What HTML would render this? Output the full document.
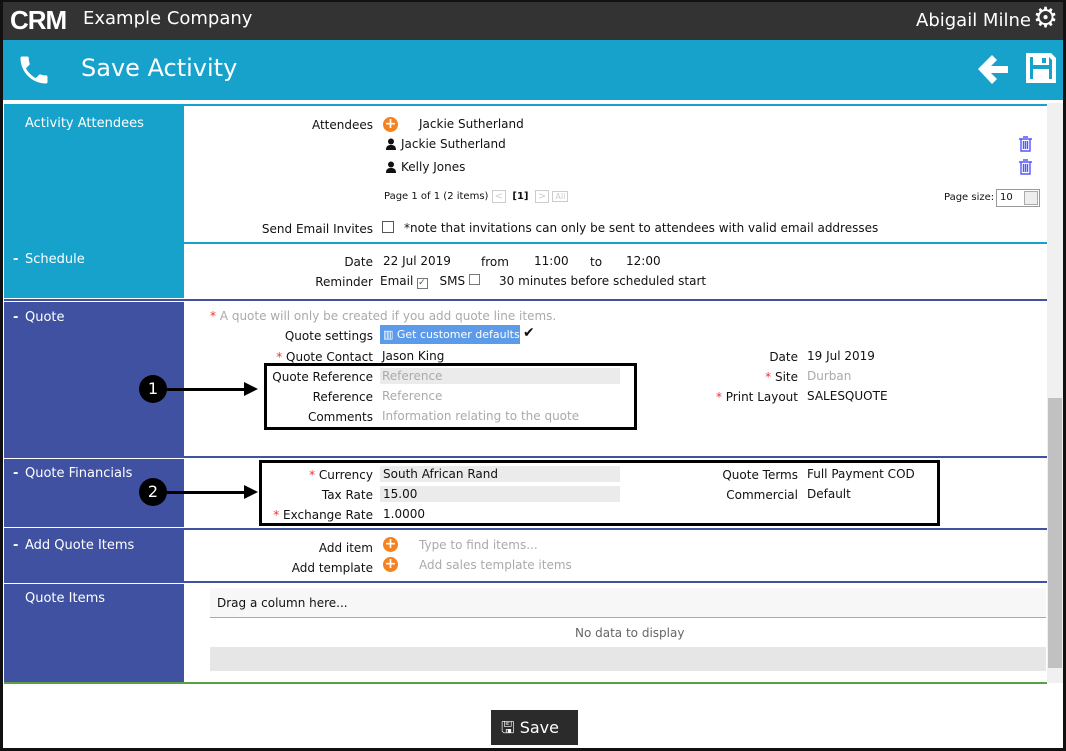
<!DOCTYPE html>
<html><head><meta charset="utf-8"><style>
*{margin:0;padding:0;box-sizing:border-box}
body{width:1066px;height:751px;position:relative;overflow:hidden;background:#fff;font-family:"DejaVu Sans","Liberation Sans",sans-serif;font-size:12px;color:#111}
.a{position:absolute;white-space:nowrap}
.r{text-align:right}
.g{color:#aaa}
.s{color:#e33}
.side{position:absolute;left:4px;width:180px;color:#fff;font-size:13px;padding:9px 0 0 21px}
.side b{font-weight:bold;position:absolute;left:9px}
.hl{position:absolute;left:4px;height:2px}
.fld{position:absolute;background:#ebebeb;height:16px}
.plus{position:absolute;width:15px;height:15px;border-radius:50%;background:#f58220;color:#fff;font-weight:bold;font-size:14px;line-height:15px;text-align:center}
.box{position:absolute;border:3px solid #000}
.num{position:absolute;width:28px;height:28px;border-radius:50%;background:#000;color:#fff;font-size:16px;text-align:center;line-height:28px}
.arr{position:absolute;height:3px;background:#000}
.arr:after{content:"";position:absolute;right:-4px;top:-6px;border-left:14px solid #000;border-top:7px solid transparent;border-bottom:7px solid transparent}
.p{position:absolute}
</style></head><body>
<div class="a" style="left:0;top:0;width:1066px;height:751px;border:3px solid #111;border-top:2px solid #111;z-index:10;pointer-events:none"></div>
<div class="a" style="left:0;top:0;width:1066px;height:40px;background:#333"></div>
<div class="a" style="left:10px;top:5px;color:#fff;font:bold 26px 'Liberation Sans',sans-serif;letter-spacing:-1px">CRM</div>
<div class="a" style="left:83px;top:8px;color:#fff;font-size:18px">Example Company</div>
<div class="a" style="left:916px;top:10px;color:#fff;font-size:18px">Abigail Milne</div>
<div class="a" style="left:1033px;top:1px;color:#fff;font-size:28px">⚙</div>
<div class="a" style="left:0;top:40px;width:1066px;height:60px;background:#17a2cb"></div>
<svg class="a" style="left:16px;top:52px" width="36" height="36" viewBox="0 0 24 24"><path fill="#fff" d="M6.6 10.8c1.4 2.8 3.8 5.1 6.6 6.6l2.2-2.2c.3-.3.7-.4 1-.2 1.1.4 2.3.6 3.6.6.6 0 1 .4 1 1V20c0 .6-.4 1-1 1C10.6 21 3 13.4 3 4c0-.6.4-1 1-1h3.5c.6 0 1 .4 1 1 0 1.3.2 2.5.6 3.6.1.3 0 .7-.2 1z"/></svg>
<div class="a" style="left:81px;top:54px;color:#fff;font-size:24px">Save Activity</div>
<svg class="a" style="left:976px;top:53px" width="34" height="32" viewBox="0 0 34 32"><path fill="#fff" d="M2 16L16 2l5 5-6 6h17v7H15l6 6-5 5z"/></svg>
<svg class="a" style="left:1024px;top:51px" width="34" height="34" viewBox="0 0 34 34"><path fill="#fff" d="M2 2h25l5 5v25H2zM6 6v22h22V9l-3-3v8H9V6zm12 1v5h4V7zM9 18h16v10H9z"/></svg>
<!-- sidebars -->
<div class="side" style="top:104px;height:138px;background:#17a2cb;padding-top:12px">Activity Attendees</div>
<div class="side" style="top:244px;height:54px;background:#17a2cb;padding-top:8px"><b>-</b>Schedule</div>
<div class="side" style="top:302px;height:154px;background:#3f51a0;padding-top:8px"><b>-</b>Quote</div>
<div class="side" style="top:459px;height:68px;background:#3f51a0;padding-top:7px"><b>-</b>Quote Financials</div>
<div class="side" style="top:530px;height:51px;background:#3f51a0;padding-top:8px"><b>-</b>Add Quote Items</div>
<div class="side" style="top:584px;height:99px;background:#3f51a0;padding-top:7px">Quote Items</div>
<div class="hl" style="top:104px;left:184px;width:863px;background:#17a2cb"></div>
<div class="hl" style="top:242px;width:1043px;background:#17a2cb"></div>
<div class="hl" style="top:299px;width:1043px;background:#3f51a0"></div>
<div class="hl" style="top:456px;width:1043px;background:#3f51a0"></div>
<div class="hl" style="top:528px;width:1043px;background:#3f51a0"></div>
<div class="hl" style="top:581px;width:1043px;background:#3f51a0"></div>
<div class="hl" style="top:682px;width:1043px;background:#5a9e46"></div>
<!-- scrollbar -->
<div class="a" style="left:1047px;top:103px;width:16px;height:580px;background:#f0f0f0"></div>
<div class="a" style="left:1048px;top:398px;width:14px;height:270px;background:#c1c1c1"></div>
<!-- attendees -->
<div class="a r" style="left:250px;width:123px;top:118px">Attendees</div>
<div class="plus" style="left:383px;top:117px">+</div>
<div class="a" style="left:419px;top:117px">Jackie Sutherland</div>
<svg class="p" style="left:385px;top:138px" width="12" height="12" viewBox="0 0 12 12"><circle cx="6" cy="3.5" r="3" fill="#111"/><path d="M1 12c0-4 2-5 5-5s5 1 5 5z" fill="#111"/></svg>
<div class="a" style="left:401px;top:137px">Jackie Sutherland</div>
<svg class="p" style="left:385px;top:161px" width="12" height="12" viewBox="0 0 12 12"><circle cx="6" cy="3.5" r="3" fill="#111"/><path d="M1 12c0-4 2-5 5-5s5 1 5 5z" fill="#111"/></svg>
<div class="a" style="left:401px;top:160px">Kelly Jones</div>
<div class="a" style="left:384px;top:191px;font-size:10px">Page 1 of 1 (2 items) <span style="border:1px solid #ccc;color:#ccc;padding:0 2px">&lt;</span> &nbsp;<b>[1]</b>&nbsp; <span style="border:1px solid #ccc;color:#ccc;padding:0 2px">&gt;</span> <span style="border:1px solid #ccc;color:#ccc;padding:0 2px;font-size:8px">All</span></div>
<svg class="p" style="left:1018px;top:136px" width="15" height="16" viewBox="0 0 15 16"><path d="M1 3h13M5 1h5M3 3v12h9V3M5.5 5v8M7.5 5v8M9.5 5v8" stroke="#55f" stroke-width="1.4" fill="none"/></svg>
<svg class="p" style="left:1018px;top:159px" width="15" height="16" viewBox="0 0 15 16"><path d="M1 3h13M5 1h5M3 3v12h9V3M5.5 5v8M7.5 5v8M9.5 5v8" stroke="#55f" stroke-width="1.4" fill="none"/></svg>
<div class="a" style="left:944px;top:192px;font-size:10px">Page size:</div>
<div class="a" style="left:996px;top:189px;width:44px;height:18px;border:1px solid #999;font-size:10px;padding:2px 3px">10<span style="position:absolute;right:1px;top:1px;width:14px;height:14px;border:1px solid #aaa;background:#eee"></span></div>
<div class="a r" style="left:200px;width:173px;top:222px">Send Email Invites</div>
<div class="a" style="left:382px;top:221px;width:12px;height:12px;border:1px solid #555"></div>
<div class="a" style="left:404px;top:221px">*note that invitations can only be sent to attendees with valid email addresses</div>
<!-- schedule -->
<div class="a r" style="left:250px;width:123px;top:255px">Date</div>
<div class="a" style="left:383px;top:254px">22 Jul 2019</div>
<div class="a" style="left:481px;top:255px">from</div>
<div class="a" style="left:534px;top:254px">11:00</div>
<div class="a" style="left:590px;top:255px">to</div>
<div class="a" style="left:626px;top:254px">12:00</div>
<div class="a r" style="left:250px;width:123px;top:275px">Reminder</div>
<div class="a" style="left:380px;top:274px">Email <span style="display:inline-block;width:11px;height:11px;border:1px solid #777;font-size:9px;line-height:9px;color:#555">✓</span> &nbsp; SMS <span style="display:inline-block;width:11px;height:11px;border:1px solid #777"></span> &nbsp;&nbsp;&nbsp; 30 minutes before scheduled start</div>
<!-- quote -->
<div class="a g" style="left:210px;top:309px"><span class="s">*</span> A quote will only be created if you add quote line items.</div>
<div class="a r" style="left:250px;width:123px;top:329px">Quote settings</div>
<div class="a" style="left:380px;top:325px;width:140px;height:19px;background:#5b9bea;color:#fff;padding:3px 3px;font-size:11px;overflow:hidden">▥ Get customer defaults</div>
<div class="a" style="left:523px;top:325px;font-size:14px">✔</div>
<div class="a r" style="left:250px;width:123px;top:350px"><span class="s">*</span> Quote Contact</div>
<div class="a" style="left:382px;top:349px">Jason King</div>
<div class="fld" style="left:380px;top:368px;width:240px"></div>
<div class="a r" style="left:250px;width:123px;top:370px">Quote Reference</div>
<div class="a g" style="left:382px;top:369px">Reference</div>
<div class="a r" style="left:250px;width:123px;top:390px">Reference</div>
<div class="a g" style="left:382px;top:389px">Reference</div>
<div class="a r" style="left:250px;width:123px;top:410px">Comments</div>
<div class="a g" style="left:382px;top:409px">Information relating to the quote</div>
<div class="a r" style="left:640px;width:158px;top:350px">Date</div>
<div class="a" style="left:807px;top:349px">19 Jul 2019</div>
<div class="a r" style="left:640px;width:158px;top:370px"><span class="s">*</span> Site</div>
<div class="a g" style="left:807px;top:369px">Durban</div>
<div class="a r" style="left:640px;width:158px;top:390px"><span class="s">*</span> Print Layout</div>
<div class="a" style="left:807px;top:389px">SALESQUOTE</div>
<div class="box" style="left:264px;top:363px;width:373px;height:67px"></div>
<div class="num" style="left:139px;top:375px">1</div>
<div class="arr" style="left:166px;top:388px;width:88px"></div>
<!-- financials -->
<div class="fld" style="left:380px;top:466px;width:240px"></div>
<div class="fld" style="left:380px;top:486px;width:240px"></div>
<div class="a r" style="left:250px;width:123px;top:468px"><span class="s">*</span> Currency</div>
<div class="a" style="left:383px;top:467px">South African Rand</div>
<div class="a r" style="left:250px;width:123px;top:488px">Tax Rate</div>
<div class="a" style="left:383px;top:487px">15.00</div>
<div class="a r" style="left:250px;width:123px;top:508px"><span class="s">*</span> Exchange Rate</div>
<div class="a" style="left:383px;top:507px">1.0000</div>
<div class="a r" style="left:640px;width:158px;top:468px">Quote Terms</div>
<div class="a" style="left:807px;top:467px">Full Payment COD</div>
<div class="a r" style="left:640px;width:158px;top:488px">Commercial</div>
<div class="a" style="left:807px;top:487px">Default</div>
<div class="box" style="left:259px;top:460px;width:681px;height:66px"></div>
<div class="num" style="left:139px;top:478px">2</div>
<div class="arr" style="left:166px;top:491px;width:88px"></div>
<!-- add items -->
<div class="a r" style="left:250px;width:123px;top:541px">Add item</div>
<div class="plus" style="left:383px;top:537px">+</div>
<div class="a g" style="left:419px;top:538px">Type to find items...</div>
<div class="a r" style="left:250px;width:123px;top:561px">Add template</div>
<div class="plus" style="left:383px;top:557px">+</div>
<div class="a g" style="left:419px;top:558px">Add sales template items</div>
<!-- quote items -->
<div class="a" style="left:210px;top:588px;width:836px;height:30px;background:#f7f7f7;border-bottom:1px solid #aaa;padding:8px 7px">Drag a column here...</div>
<div class="a" style="left:575px;top:626px;color:#666">No data to display</div>
<div class="a" style="left:210px;top:647px;width:836px;height:24px;background:#e6e6e6"></div>
<!-- save -->
<div class="a" style="left:491px;top:710px;width:87px;height:35px;background:#2b2b2b;color:#fff;font-size:16px;padding:7px 0 0 10px">🖫︎ Save</div>
</body></html>
